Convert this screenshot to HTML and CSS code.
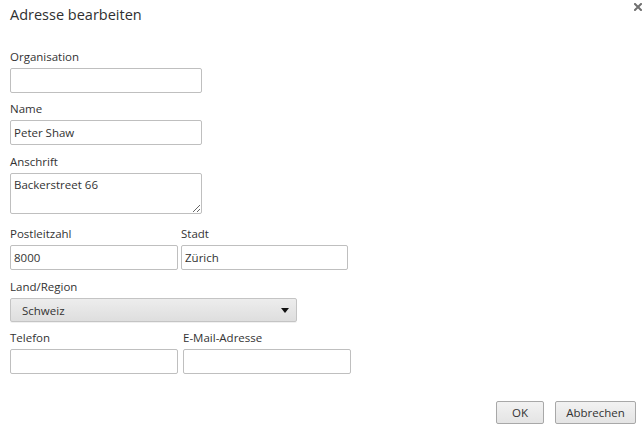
FILE: index.html
```html
<!DOCTYPE html>
<html lang="de">
<head>
<meta charset="utf-8">
<title>Adresse bearbeiten</title>
<link rel="stylesheet" href="styles.css">
</head>
<body>
<div class="dialog">
  <button class="close" aria-label="Schließen">
    <svg width="8" height="8" viewBox="0 0 8 8"><path d="M1 1 L7 7 M7 1 L1 7" stroke="#707070" stroke-width="2" stroke-linecap="square"/></svg>
  </button>
  <h1 class="title">Adresse bearbeiten</h1>
  <form class="form">
    <div class="field">
      <label class="label">Organisation</label>
      <input class="input w-wide" type="text" value="">
    </div>
    <div class="field">
      <label class="label">Name</label>
      <input class="input w-wide" type="text" value="Peter Shaw">
    </div>
    <div class="field field-area">
      <label class="label">Anschrift</label>
      <textarea class="input area w-wide">Backerstreet 66</textarea>
    </div>
    <div class="row row-a">
      <div class="field">
        <label class="label">Postleitzahl</label>
        <input class="input w-half" type="text" value="8000">
      </div>
      <div class="field">
        <label class="label">Stadt</label>
        <input class="input w-half2" type="text" value="Zürich">
      </div>
    </div>
    <div class="field field-select">
      <label class="label">Land/Region</label>
      <div class="select-wrap">
        <select class="select"><option>Schweiz</option></select>
        <span class="arrow"></span>
      </div>
    </div>
    <div class="row row-b">
      <div class="field">
        <label class="label">Telefon</label>
        <input class="input w-half" type="text" value="">
      </div>
      <div class="field">
        <label class="label">E-Mail-Adresse</label>
        <input class="input w-half" type="text" value="">
      </div>
    </div>
  </form>
  <div class="actions">
    <button class="btn btn-ok" type="button">OK</button>
    <button class="btn btn-cancel" type="button">Abbrechen</button>
  </div>
</div>
</body>
</html>
```

FILE: styles.css
```css
html, body {
  margin: 0;
  padding: 0;
  background: #ffffff;
}
body {
  font-family: "Open Sans", "Noto Sans", sans-serif;
  font-size: 11.5px;
  color: #333333;
}
.dialog {
  position: relative;
  width: 643px;
  height: 438px;
  box-sizing: border-box;
  padding: 5px 7px 0 10px;
  display: flex;
  flex-direction: column;
}
.close {
  position: absolute;
  top: 2px;
  right: 0;
  width: 10px;
  height: 10px;
  padding: 0;
  border: 0;
  background: transparent;
  display: flex;
  align-items: center;
  justify-content: center;
}
.title {
  margin: 0;
  font-size: 14.5px;
  font-weight: normal;
  line-height: 20px;
  color: #303030;
}
.form {
  margin-top: 24px;
  display: flex;
  flex-direction: column;
  gap: 8px;
}
.field {
  display: flex;
  flex-direction: column;
  gap: 3px;
}
.field-area {
  margin-top: 1px;
  margin-bottom: 4px;
}
.field-select {
  margin-top: 1px;
}
.label {
  line-height: 16px;
  color: #333333;
}
.input {
  box-sizing: border-box;
  height: 25px;
  margin: 0;
  padding: 0 3px;
  border: 1px solid #bfbfbf;
  border-radius: 2px;
  font-family: inherit;
  font-size: 11.5px;
  color: #333333;
  background: #ffffff;
  outline: none;
}
.area {
  height: 41px;
  padding: 3px 3px;
  resize: both;
  line-height: 16px;
}
.w-wide { width: 192px; }
.w-half { width: 168px; }
.w-half2 { width: 167px; }
.row {
  display: flex;
}
.row-a { gap: 3px; }
.row-b { gap: 5px; }
.select-wrap {
  position: relative;
  width: 287px;
  height: 24px;
}
.select {
  appearance: none;
  -webkit-appearance: none;
  box-sizing: border-box;
  width: 100%;
  height: 24px;
  margin: 0;
  padding: 0 0 0 11px;
  border: 1px solid #c4c4c4;
  border-radius: 2px;
  background: linear-gradient(#ededed, #dedede);
  font-family: inherit;
  font-size: 11.5px;
  color: #333333;
  box-shadow: 0 1px 0 rgba(0,0,0,0.06);
}
.arrow {
  position: absolute;
  right: 8px;
  top: 10px;
  width: 0;
  height: 0;
  border-left: 4px solid transparent;
  border-right: 4px solid transparent;
  border-top: 5px solid #111111;
  pointer-events: none;
}
.actions {
  margin-top: auto;
  margin-bottom: 14px;
  display: flex;
  justify-content: flex-end;
  gap: 11px;
}
.btn {
  box-sizing: border-box;
  height: 23px;
  padding: 0;
  border: 1px solid #a8a8a8;
  border-radius: 2px;
  background: linear-gradient(#f2f2f2, #e4e4e4);
  font-family: inherit;
  font-size: 11.5px;
  color: #333333;
}
.btn-ok { width: 48px; }
.btn-cancel { width: 81px; }
```
